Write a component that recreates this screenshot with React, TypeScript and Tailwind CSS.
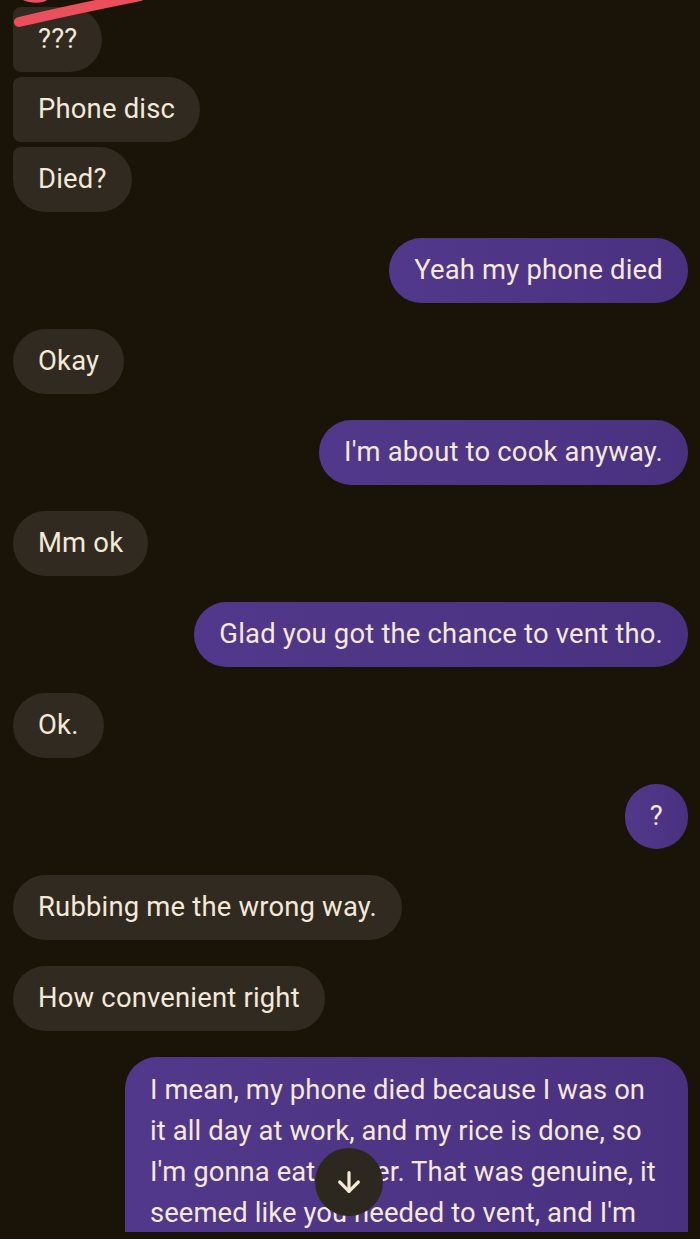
import React from "react";
import { ArrowDown } from "lucide-react";

const font = { fontFamily: "Roboto, 'Noto Sans', sans-serif" };

const In = ({ text, cls = "rounded-[33px]" }: { text: string; cls?: string }) => (
  <div className={`self-start h-[65px] flex items-center px-[25px] bg-[#302a21] text-[#f4e9d8] text-[27.4px] tracking-[0.2px] ${cls}`}>
    {text}
  </div>
);

const Out = ({ text }: { text: string }) => (
  <div className="self-end h-[65px] flex items-center px-[25px] rounded-[33px] bg-gradient-to-r from-[#52388a] to-[#4a3180] text-[#f4e9d8] text-[27.4px] tracking-[0.2px]">
    {text}
  </div>
);

export default function App() {
  return (
    <div className="relative w-[700px] h-[1239px] overflow-hidden bg-[#1a1408]" style={font}>
      <div className="flex flex-col pt-[7px] pl-[13px] pr-[12px]">
        {/* grouped incoming */}
        <div className="flex flex-col gap-[5px]">
          <In text="???" cls="rounded-[33px] rounded-l-[8px]" />
          <In text="Phone disc" cls="rounded-r-[33px] rounded-l-[8px]" />
          <In text="Died?" cls="rounded-r-[33px] rounded-tl-[8px] rounded-bl-[33px]" />
        </div>
        <div className="flex flex-col gap-[26px] mt-[26px]">
          <Out text="Yeah my phone died" />
          <In text="Okay" />
          <Out text="I'm about to cook anyway." />
          <In text="Mm ok" />
          <Out text="Glad you got the chance to vent tho." />
          <In text="Ok." />
          <Out text="?" />
          <In text="Rubbing me the wrong way." />
          <In text="How convenient right" />
          <div className="self-end w-[563px] h-[175px] rounded-t-[32px] bg-gradient-to-r from-[#52388a] to-[#4a3180] text-[#f4e9d8] text-[27.4px] tracking-[0.1px] leading-[41px] pt-[13px] px-[25px] whitespace-nowrap">
            <div>I mean, my phone died because I was on</div>
            <div>it all day at work, and my rice is done, so</div>
            <div>I'm gonna eat dinner. That was genuine, it</div>
            <div>seemed like you needed to vent, and I'm</div>
          </div>
        </div>
      </div>

      {/* scroll down button */}
      <div className="absolute left-[315px] top-[1148px] w-[68px] h-[68px] rounded-full bg-[#2d281f] flex items-center justify-center">
        <ArrowDown className="w-[32px] h-[32px] text-[#f4e9d8]" strokeWidth={2.4} />
      </div>

      {/* red scribble */}
      <svg className="absolute left-0 top-0" width="160" height="40" viewBox="0 0 160 40">
        <path d="M19 22 Q70 10 140 -4" stroke="#e9505c" strokeWidth="10" strokeLinecap="round" fill="none" />
        <path d="M22 -3 Q32 2 44 -1" stroke="#e9505c" strokeWidth="5" strokeLinecap="round" fill="none" />
      </svg>
    </div>
  );
}
